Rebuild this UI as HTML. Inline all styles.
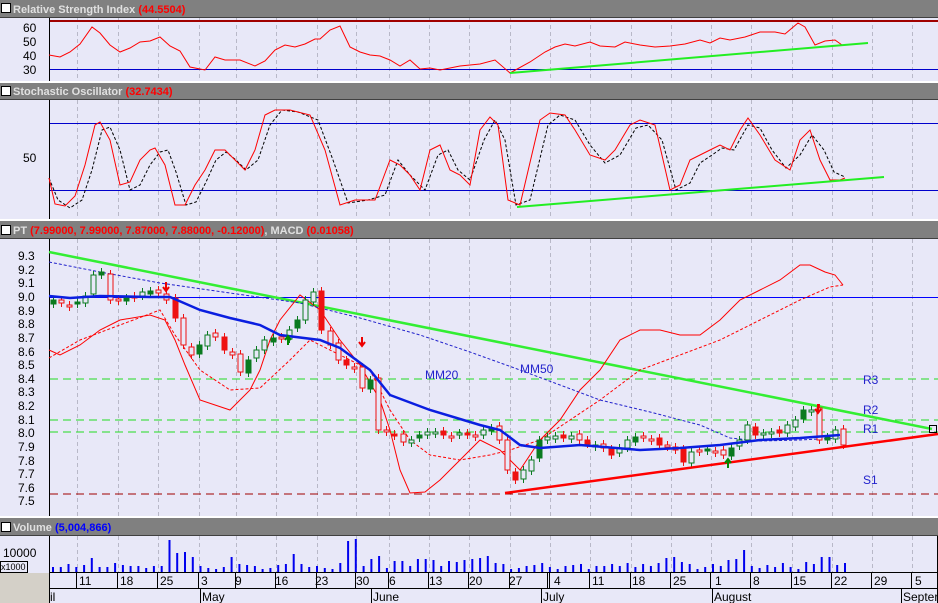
<!DOCTYPE html>
<html><head><meta charset="utf-8"><style>
html,body{margin:0;padding:0;background:#fff;}
svg{display:block;font-family:"Liberation Sans",sans-serif;}
</style></head><body>
<svg id="s" width="938" height="603" viewBox="0 0 938 603" xmlns="http://www.w3.org/2000/svg">
<rect width="938" height="603" fill="#e8e8f8"/>
<!-- headers -->
<g>
<rect x="0" y="0" width="938" height="17" fill="#808080"/>
<rect x="0" y="81" width="938" height="3" fill="#fff"/><rect x="0" y="83" width="938" height="16" fill="#808080"/>
<rect x="0" y="219" width="938" height="3" fill="#fff"/><rect x="0" y="221" width="938" height="17" fill="#808080"/>
<rect x="0" y="516" width="938" height="3" fill="#fff"/><rect x="0" y="518" width="938" height="17" fill="#808080"/>
<line x1="0" y1="17.5" x2="938" y2="17.5" stroke="#404040"/>
<line x1="0" y1="99.5" x2="938" y2="99.5" stroke="#404040"/>
<line x1="0" y1="238.5" x2="938" y2="238.5" stroke="#404040"/>
<line x1="0" y1="535.5" x2="938" y2="535.5" stroke="#404040"/>
<rect x="1.5" y="3.5" width="9" height="9" fill="#fff" stroke="#000"/>
<rect x="1.5" y="86.5" width="9" height="9" fill="#fff" stroke="#000"/>
<rect x="1.5" y="225.5" width="9" height="9" fill="#fff" stroke="#000"/>
<rect x="1.5" y="522.5" width="9" height="9" fill="#fff" stroke="#000"/>
<g font-size="11" font-weight="bold">
<text x="13" y="13" fill="#e0e0e0">Relative Strength Index <tspan fill="#ff0000">(44.5504)</tspan></text>
<text x="13" y="95" fill="#e0e0e0">Stochastic Oscillator <tspan fill="#ff0000">(32.7434)</tspan></text>
<text x="13" y="234" fill="#e0e0e0">PT <tspan fill="#ff0000">(7.99000, 7.99000, 7.87000, 7.88000, -0.12000)</tspan>, MACD <tspan fill="#ff0000">(0.01058)</tspan></text>
<text x="13" y="531" fill="#e0e0e0">Volume <tspan fill="#0000ff">(5,004,866)</tspan></text>
</g>
</g>
<!-- left axis lines -->
<g stroke="#000">
<line x1="49.5" y1="18" x2="49.5" y2="81"/>
<line x1="49.5" y1="100" x2="49.5" y2="219"/>
<line x1="49.5" y1="239" x2="49.5" y2="516"/>
<line x1="49.5" y1="536" x2="49.5" y2="603"/>
</g>
<rect x="0" y="573" width="49" height="30" fill="#d4d0c8"/>
<!-- gridlines -->
<g id="grid" stroke="#b8b8c8" stroke-dasharray="4,3"></g>
<g font-size="12" fill="#000">
<text x="23" y="32">60</text><text x="23" y="46">50</text><text x="23" y="60">40</text><text x="23" y="74">30</text>
<text x="23" y="162">50</text>
<text x="18" y="260">9.3</text><text x="18" y="274">9.2</text><text x="18" y="287">9.1</text><text x="18" y="301">9.0</text><text x="18" y="315">8.9</text><text x="18" y="328">8.8</text><text x="18" y="342">8.7</text><text x="18" y="356">8.6</text><text x="18" y="369">8.5</text><text x="18" y="383">8.4</text><text x="18" y="396">8.3</text><text x="18" y="410">8.2</text><text x="18" y="424">8.1</text><text x="18" y="437">8.0</text><text x="18" y="451">7.9</text><text x="18" y="465">7.8</text><text x="18" y="478">7.7</text><text x="18" y="492">7.6</text><text x="18" y="505">7.5</text>
<text x="3" y="557">10000</text>
</g>
<rect x="0.5" y="561.5" width="27" height="11" fill="#e8e8f8" stroke="#000"/>
<text x="1" y="570" font-size="9">x1000</text>
<!-- RSI -->
<line x1="50" y1="21" x2="938" y2="21" stroke="#a00000" stroke-width="2"/>
<line x1="50" y1="69.5" x2="938" y2="69.5" stroke="#0000cc"/>
<polyline fill="none" stroke="#f00" points="49,55 60,57 70,52 80,44 92,27 100,33 110,45 120,52 130,48 140,42 150,41 160,37 170,46 180,51 190,67 200,69 205,70 215,57 225,60 240,60 255,66 265,61 275,50 285,45 295,47 305,44 315,39 320,39 330,30 340,26 350,47 360,52 370,55 380,56 390,60 400,66 410,60 420,69 430,68 440,70 460,66 480,64 495,60 510,73 530,62 545,52 555,47 565,44 575,46 590,42 600,46 615,47 625,42 640,45 655,47 670,46 685,44 700,40 710,43 720,38 730,40 745,37 760,32 775,32 785,34 798,23 805,27 815,45 825,41 835,40 842,45"/>
<line x1="510" y1="73" x2="868" y2="43" stroke="#22ee22" stroke-width="2"/>
<!-- Stoch -->
<line x1="50" y1="123.5" x2="938" y2="123.5" stroke="#0000cc"/>
<line x1="50" y1="190.5" x2="938" y2="190.5" stroke="#0000cc"/>
<polyline fill="none" stroke="#000" stroke-dasharray="3,2" points="49,178 58,200 70,208 82,200 92,170 102,130 110,127 120,150 130,190 140,185 150,165 160,152 168,150 176,172 186,205 196,202 206,182 216,160 226,152 236,160 246,170 258,160 270,125 282,110 298,112 318,120 333,160 348,203 368,200 385,195 398,160 410,175 425,190 438,155 448,150 458,170 470,180 484,140 495,120 505,140 516,205 530,200 548,125 560,115 575,120 590,145 605,163 620,155 636,128 648,125 662,140 676,190 690,183 700,163 712,155 722,148 734,150 748,125 760,128 772,150 786,168 800,155 812,135 824,150 834,172 845,177"/>
<polyline fill="none" stroke="#f00" points="49,178 55,204 65,206 75,196 85,165 95,125 100,122 110,140 120,185 130,182 140,160 150,150 155,148 165,165 175,205 185,205 195,185 205,170 215,150 225,150 235,160 245,170 255,150 265,115 275,110 290,110 310,115 325,150 340,205 355,200 375,200 390,160 400,165 410,175 420,190 430,150 440,145 450,170 460,175 470,185 480,130 490,117 498,125 508,200 520,205 540,120 550,113 565,115 575,130 590,155 605,160 615,150 630,125 640,120 655,125 670,190 680,185 690,160 700,155 710,150 720,145 730,150 740,130 748,118 760,135 775,160 790,170 800,140 810,130 820,160 830,180 840,180 845,178"/>
<line x1="517" y1="207" x2="884" y2="177" stroke="#22ee22" stroke-width="2"/>
<!-- PT -->
<line x1="50" y1="297.5" x2="938" y2="297.5" stroke="#0000ff"/>
<g stroke-dasharray="8,5" stroke-width="1">
<line x1="50" y1="379" x2="938" y2="379" stroke="#22dd22"/>
<line x1="50" y1="420" x2="938" y2="420" stroke="#22dd22"/>
<line x1="50" y1="432" x2="938" y2="432" stroke="#22dd22"/>
<line x1="50" y1="494" x2="938" y2="494" stroke="#a00000"/>
</g>
<line x1="49" y1="252" x2="932" y2="429" stroke="#33ee33" stroke-width="2.5"/>
<rect x="929.5" y="425.5" width="7" height="7" fill="none" stroke="#000"/>
<polyline fill="none" stroke="#f00" points="49,350 60,355 80,345 100,330 120,320 150,315 165,320 175,340 185,365 200,400 230,410 250,390 260,370 270,340 280,320 300,295 320,310 340,340 360,365 380,400 390,430 400,470 410,493 425,492 440,480 460,460 480,440 500,450 520,470 540,440 560,420 580,390 600,370 620,340 640,330 660,330 680,335 700,335 720,320 740,300 760,290 780,280 800,265 810,265 825,272 835,275 843,285"/>
<polyline fill="none" stroke="#f00" stroke-dasharray="3,2" points="49,358 80,340 120,325 160,310 175,335 200,370 230,390 260,388 290,360 310,340 330,350 350,360 370,370 390,410 410,440 430,455 460,460 490,455 510,450 540,440 570,420 600,400 640,370 680,355 720,340 760,320 800,300 830,287 843,285"/>
<polyline fill="none" stroke="#2222cc" stroke-dasharray="3,2" points="49,262 100,272 160,283 230,293 300,303 360,318 420,335 470,352 520,370 560,385 600,400 650,412 700,425 730,438 760,441 800,440 840,438"/>
<g id="candles"></g>
<polyline fill="none" stroke="#0a1ee0" stroke-width="2.5" points="49,296 70,298 100,296 150,297 170,297 200,310 230,318 260,325 280,335 320,340 340,348 370,370 390,395 430,410 480,425 500,430 520,445 540,448 580,445 640,450 680,448 720,445 760,440 800,438 840,435"/>
<line x1="505" y1="493" x2="938" y2="434" stroke="#f00" stroke-width="2.5"/>
<path d="M166 282v8M163 287l3 4l3-4M362 337v8M359 342l3 4l3-4M818 404v8M815 409l3 4l3-4" stroke="#e00" stroke-width="2" fill="none"/>
<path d="M288 345v-8M285 340l3-4l3 4M728 468v-8M725 463l3-4l3 4" stroke="#080" stroke-width="2" fill="none"/>
<g font-size="12" fill="#2222cc">
<text x="425" y="379">MM20</text><text x="520" y="373">MM50</text>
<text x="863" y="384">R3</text><text x="863" y="414">R2</text><text x="863" y="433">R1</text><text x="863" y="484">S1</text>
</g>
<!-- volume -->
<path id="vol" stroke="#0000ee" stroke-width="2" fill="none"/>
<line x1="49" y1="572.5" x2="938" y2="572.5" stroke="#000"/>
<line x1="49" y1="588.5" x2="938" y2="588.5" stroke="#000"/>
<g id="ticks" stroke="#000"></g>
<g font-size="12" fill="#000" id="lbl">
<text x="79" y="585">11</text><text x="120" y="585">18</text><text x="160" y="585">25</text><text x="201" y="585">3</text><text x="235" y="585">9</text><text x="275" y="585">16</text><text x="315" y="585">23</text><text x="356" y="585">30</text><text x="389" y="585">6</text><text x="429" y="585">13</text><text x="469" y="585">20</text><text x="509" y="585">27</text><text x="554" y="585">4</text><text x="592" y="585">11</text><text x="632" y="585">18</text><text x="673" y="585">25</text><text x="715" y="585">1</text><text x="753" y="585">8</text><text x="793" y="585">15</text><text x="834" y="585">22</text><text x="874" y="585">29</text><text x="915" y="585">5</text>
<text x="50" y="601">il</text><text x="202" y="601">May</text><text x="373" y="601">June</text><text x="543" y="601">July</text><text x="714" y="601">August</text><text x="903" y="601">Septer</text>
</g>
<g stroke="#000">
<line x1="200.5" y1="589" x2="200.5" y2="603"/><line x1="371.5" y1="589" x2="371.5" y2="603"/><line x1="541.5" y1="589" x2="541.5" y2="603"/><line x1="712.5" y1="589" x2="712.5" y2="603"/><line x1="901.5" y1="589" x2="901.5" y2="603"/>
<line x1="937.5" y1="536" x2="937.5" y2="603"/>
</g>
</svg>
<script>
var NS="http://www.w3.org/2000/svg";
function el(p,t,a){var e=document.createElementNS(NS,t);for(var k in a)e.setAttribute(k,a[k]);p.appendChild(e);return e;}
var gx=[77,118,158,199,236,276,317,356,389,429,469,510,550,590,631,671,711,751,792,832,872,912];
var g=document.getElementById('grid'),tk=document.getElementById('ticks');
gx.forEach(function(x){[[18,81],[100,219],[239,516],[536,572]].forEach(function(r){el(g,'line',{x1:x+.5,y1:r[0],x2:x+.5,y2:r[1]});});
el(tk,'line',{x1:x-.5,y1:573,x2:x-.5,y2:588});});
el(tk,'line',{x1:547.5,y1:573,x2:547.5,y2:588});
var cl=[[53,300],[61,303],[69,305],[77,302],[85,296],[93,275],[101,272],[110,300],[118,300],[126,298],[134,296],[142,292],[150,291],[158,293],[166,300],[175,318],[183,345],[191,355],[199,345],[207,335],[215,337],[224,350],[232,355],[240,372],[248,360],[256,350],[264,340],[273,338],[281,338],[289,330],[297,320],[305,300],[313,292],[321,330],[330,345],[338,360],[346,365],[354,368],[362,388],[370,380],[378,430],[386,432],[394,435],[403,442],[411,440],[419,435],[427,432],[435,432],[443,435],[451,437],[459,433],[467,433],[475,436],[483,430],[491,428],[499,440],[507,470],[515,480],[523,470],[531,460],[539,440],[547,437],[555,436],[563,438],[571,436],[579,440],[587,444],[595,445],[603,448],[611,455],[619,448],[627,440],[635,437],[643,438],[651,440],[659,445],[667,445],[675,450],[683,462],[691,452],[699,450],[707,449],[715,451],[723,455],[731,448],[739,440],[747,425],[755,435],[763,433],[771,432],[779,433],[787,425],[795,420],[803,410],[811,410],[819,440],[827,437],[835,430],[843,445]];
var cg=document.getElementById('candles');
for(var i=0;i<cl.length;i++){var x=cl[i][0],c=cl[i][1],o=i?cl[i-1][1]+((i*7)%5-2):c+4;
var up=c<o,col=up?'#0a7a20':'#ee1111',t=Math.min(o,c),h=Math.max(2,Math.abs(o-c));
el(cg,'line',{x1:x+.5,y1:t-4,x2:x+.5,y2:t+h+4,stroke:col});
el(cg,'rect',{x:x-2,y:t,width:5,height:h,fill:(i%3==0)?col:'#e8e8f8',stroke:col});}
var vh=[567,567,564,567,565,558,567,567,563,565,566,566,568,566,566,540,553,552,557,566,568,569,567,557,564,565,566,569,568,565,564,554,564,567,566,568,569,563,541,539,566,559,556,568,561,561,566,559,559,560,566,561,562,560,559,558,556,563,564,569,568,566,565,563,567,569,566,565,564,569,566,566,564,566,563,567,564,566,563,558,557,562,564,569,567,564,566,560,559,550,566,568,565,567,563,567,569,562,564,557,557,565,563];
var d='';for(var j=0;j<vh.length;j++){var xx=53+j*((845-53)/(vh.length-1));d+='M'+xx.toFixed(1)+' 572V'+vh[j];}
document.getElementById('vol').setAttribute('d',d);
</script>
</body></html>
